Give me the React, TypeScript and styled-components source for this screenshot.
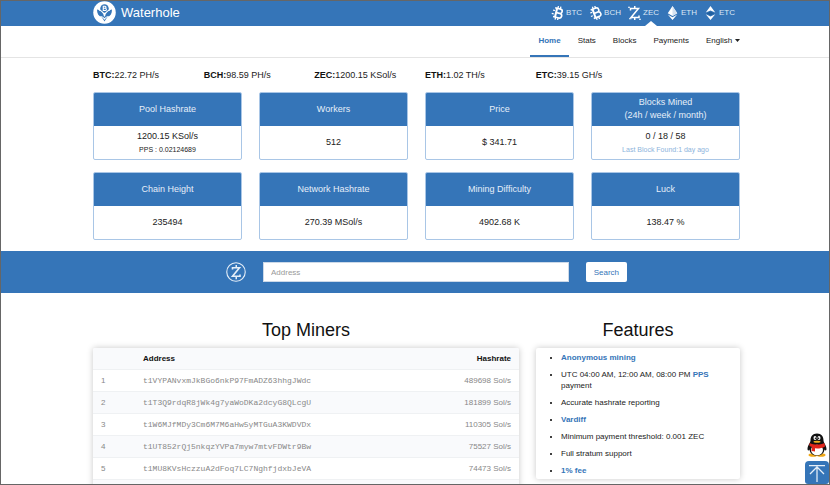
import React from "react";
import styled, { createGlobalStyle, css } from "styled-components";

const blue = "#3575b8";

const GlobalStyle = createGlobalStyle`
  *, *::before, *::after { box-sizing: border-box; }
  body {
    margin: 0;
    background: #fff;
    color: #222;
    font: 8px/11px "Liberation Sans", Arial, sans-serif;
  }
  a { color: inherit; text-decoration: none; }
`;

const Frame = styled.div`
  position: relative;
  height: 100vh;
  overflow: hidden;
  border: 1px solid #666;
`;

const gutter = css`
  padding-left: 92px;
  padding-right: 89px;
`;

const Header = styled.header`
  ${gutter}
  display: flex;
  align-items: center;
  justify-content: space-between;
  height: 25px;
  background: ${blue};
  color: #fff;
`;

const Brand = styled.a`
  display: flex;
  align-items: center;
  gap: 5px;
  padding-bottom: 2px;
  font-size: 13px;
  line-height: 16px;
  svg { width: 23px; height: 23px; }
`;

const CoinList = styled.nav`
  display: flex;
  align-self: stretch;
  gap: 7px;
  padding-right: 5px;
`;

const Coin = styled.a`
  display: flex;
  align-items: center;
  gap: 2px;
  color: #dce8f5;
  svg { width: 13px; height: 14px; margin-bottom: 2px; }
`;

const CoinLabel = styled.span<{ $active?: boolean }>`
  position: relative;
  display: flex;
  align-items: center;
  height: 100%;
  padding-bottom: 2px;
  ${({ $active }) =>
    $active &&
    css`
      &::after {
        content: "";
        position: absolute;
        bottom: 0;
        left: 50%;
        margin-left: -6px;
        border: 6px solid transparent;
        border-top: 0;
        border-bottom: 5px solid #fff;
      }
    `}
`;

const NavBar = styled.nav`
  ${gutter}
  display: flex;
  justify-content: flex-end;
  gap: 1px;
  height: 32px;
  border-bottom: 1px solid #e4e4e4;
`;

const Tab = styled.a<{ $active?: boolean }>`
  display: flex;
  align-items: center;
  padding: 0 8px;
  border-bottom: 2px solid ${({ $active }) => ($active ? blue : "transparent")};
  color: ${({ $active }) => ($active ? blue : "#222")};
  font-weight: ${({ $active }) => ($active ? 700 : 400)};
`;

const Language = styled.label`
  display: flex;
  align-items: center;
  gap: 2px;
  padding: 0 0 2px 8px;
  svg { width: 5px; height: 3px; }
`;

const LanguageSelect = styled.select`
  appearance: none;
  padding: 0;
  border: 0;
  background: none;
  color: #222;
  font: inherit;
`;

const Rates = styled.dl`
  display: grid;
  grid-template-columns: repeat(6, 1fr);
  margin: 0 -17px 0 0;
  padding: 11px 0;
  font-size: 9px;
  line-height: 12px;
  div { display: flex; }
  dt { font-weight: 700; color: #111; }
  dd { margin: 0; }
`;

const Summary = styled.section`
  ${gutter}
`;

const Cards = styled.div`
  display: grid;
  grid-template-columns: repeat(4, 1fr);
  gap: 12px 17px;
`;

const Card = styled.article`
  overflow: hidden;
  border: 1px solid #a9c6e6;
  border-radius: 2px;
  text-align: center;
  font-size: 9px;
  line-height: 13px;
`;

const CardTitle = styled.h2`
  display: flex;
  align-items: center;
  justify-content: center;
  height: 34px;
  margin: -1px -1px 0;
  background: ${blue};
  color: #e6eff8;
  font: inherit;
`;

const CardBody = styled.div`
  display: flex;
  flex-direction: column;
  align-items: center;
  justify-content: center;
  height: 33px;
`;

const CardNote = styled.small<{ $soft?: boolean }>`
  font-size: 7px;
  color: ${({ $soft }) => ($soft ? "#8db4dc" : "#222")};
`;

const SearchBar = styled.form`
  display: flex;
  align-items: center;
  justify-content: center;
  gap: 17px;
  margin-top: 11px;
  padding: 11px 202px 11px 225px;
  background: ${blue};
  svg { width: 20px; height: 20px; flex: none; }
`;

const AddressInput = styled.input`
  flex: 1;
  min-width: 0;
  height: 20px;
  padding: 0 7px;
  border: 1px solid #ccd9e8;
  border-radius: 0;
  background: #fff;
  font: inherit;
  &::placeholder { color: #999; opacity: 1; }
`;

const SearchButton = styled.button`
  height: 20px;
  padding: 0 8px;
  border: 0;
  border-radius: 2px;
  background: #fff;
  color: ${blue};
  font: inherit;
`;

const Details = styled.main`
  ${gutter}
  display: grid;
  grid-template-columns: 426fr 204fr;
  align-items: start;
  gap: 17px;
  padding-top: 27px;
`;

const Heading = styled.h2`
  margin: 0 0 8px;
  color: #111;
  font-size: 18px;
  font-weight: 400;
  line-height: 20px;
  text-align: center;
`;

const Panel = styled.div`
  overflow: hidden;
  border-radius: 2px;
  background: #fff;
  box-shadow: 0 0 6px rgba(0, 0, 0, 0.22);
`;

const MinerTable = styled.table`
  width: 100%;
  border-collapse: collapse;
  color: #888;
  tr { height: 22px; }
  thead tr { height: 21px; }
  tr:nth-child(even), thead tr { background: #f9fafc; }
  tbody tr { border-top: 1px solid #eff1f3; }
  th, td { padding: 0 8px; text-align: left; }
  th { color: #111; }
  th:first-child { width: 42px; }
  th:last-child, td:last-child { text-align: right; }
`;

const Address = styled.code`
  font: 8px/11px "Liberation Mono", "Courier New", monospace;
`;

const FeatureList = styled.ul`
  display: flex;
  flex-direction: column;
  gap: 6px;
  margin: 0;
  padding: 4px 24px 3px 25px;
  li::marker { color: #000; }
`;

const FeatureLink = styled.a`
  color: ${blue};
  font-weight: 700;
`;

const Floating = styled.aside`
  position: absolute;
  right: 0;
  bottom: 0;
  display: flex;
  flex-direction: column;
  align-items: center;
  gap: 4px;
  a { display: block; }
  svg { display: block; }
`;

const TopButton = styled.button`
  width: 24px;
  height: 23px;
  padding: 0;
  border: 0;
  border-radius: 4px 4px 3px 3px;
  background: ${blue};
  svg { width: 24px; height: 23px; }
`;

const Logo = () => (
  <svg viewBox="0 0 46 46" aria-hidden="true">
    <circle cx="23" cy="23" r="22.5" fill="#fff" />
    <circle cx="23" cy="15" r="8.5" fill={blue} />
    <path d="M8 17c8 1 13 5 15 12 2-7 7-11 15-12 0 8-3 13-9 15-2 2-4 6-6 9-2-3-4-7-6-9-6-2-9-7-9-15z" fill={blue} />
    <path d="M12 18c7 2 10 6 11 13 1-7 4-11 11-13" fill="none" stroke="#fff" strokeWidth="2.200" />
    <path d="M15 31c4 0 6 2 8 5 2-3 4-5 8-5" fill="none" stroke="#fff" strokeWidth="2.200" />
    <path d="M20.500 9.500v10M19.500 10.500h4.500a2 2 0 0 1 0 4h-3.500h4a2.200 2.200 0 0 1 0 4.500h-5" fill="none" stroke="#fff" strokeWidth="2.200" />
  </svg>
);

const BitcoinShape = ({ angle }: { angle: number }) => (
  <svg viewBox="0 0 26 28" fill="none" stroke="#fff" aria-hidden="true">
    <g transform={`rotate(${angle} 13 14)`}>
      <path d="M10 5v18" strokeWidth="4" />
      <path d="M6 5h11a4.200 4.200 0 0 1 0 8.800H10h8a4.400 4.400 0 0 1 0 9.200H6" strokeWidth="3.200" />
      <path d="M11.500 0v5M16.500 0v5M11.500 23v5M16.500 23v5" strokeWidth="2.600" />
      <path d="M3 10.500h4M2 17.500h4" strokeWidth="2.200" />
    </g>
  </svg>
);

const ZcashShape = () => (
  <svg viewBox="0 0 26 28" fill="none" stroke="#fff" aria-hidden="true">
    <path d="M5 9V5h16L6 23h16v-4" strokeWidth="3" />
    <path d="M13.500 0v4M13.500 24v4" strokeWidth="3" />
    <path d="M0 2.500h4M2 25.500h5M22 26.500h4" strokeWidth="2.200" />
  </svg>
);

const EthShape = () => (
  <svg viewBox="0 0 26 28" fill="#fff" aria-hidden="true">
    <path d="M13 0 22.500 14.500 13 20 3.500 14.500z" />
    <path d="M3.500 17l9.500 5.500 9.500-5.500L13 28z" />
    <path d="M13 0v20l9.500-5.500z" fill="#d4e2f1" />
  </svg>
);

const EtcShape = () => (
  <svg viewBox="0 0 26 28" fill="#fff" aria-hidden="true">
    <path d="M13 0 22.500 13 13 9 3.500 13z" />
    <path d="M13 11 21 14.500 13 19 5 14.500z" fill="#1f5f9f" />
    <path d="M3.500 16.500 13 21l9.500-4.500L13 28z" />
  </svg>
);

const ZcashCoin = () => (
  <svg viewBox="0 0 40 40" fill="none" stroke="#e6eff8" aria-hidden="true">
    <circle cx="20" cy="20" r="18.500" strokeWidth="2.200" />
    <path d="M13 15v-3.500h14L13 28.500h15V25" strokeWidth="3.200" />
    <path d="M20.500 6v5M20.500 29v5.500" strokeWidth="3" />
  </svg>
);

const Penguin = () => (
  <svg width="20" height="24" viewBox="0 0 40 48" aria-hidden="true">
    <ellipse cx="12" cy="44" rx="9" ry="3.500" fill="#f0a818" />
    <ellipse cx="28" cy="44" rx="9" ry="3.500" fill="#f0a818" />
    <path d="M20 1c9 0 13 6 13 14 0 4 6 10 6 17 0 3-2 4-4 1-1 8-7 12-15 12S6 41 5 33c-2 3-4 2-4-1 0-7 6-13 6-17C7 7 11 1 20 1z" fill="#111" />
    <ellipse cx="20" cy="34" rx="12" ry="10.500" fill="#fff" />
    <ellipse cx="16" cy="10" rx="3" ry="4" fill="#fff" />
    <ellipse cx="24" cy="10" rx="3" ry="4" fill="#fff" />
    <circle cx="17" cy="10.500" r="1.600" fill="#111" />
    <circle cx="23" cy="10.500" r="1.600" fill="#111" />
    <ellipse cx="20" cy="17.500" rx="7" ry="2" fill="#f0b020" />
    <path d="M5 20c9 4 21 4 30 0l1 7c-5 3-10 4-16 4l-4-.5V37l-7-1 1-8-5-2z" fill="#e1251b" />
  </svg>
);

const coins = [
  { name: "BTC", icon: <BitcoinShape angle={14} />, rate: "22.72 PH/s" },
  { name: "BCH", icon: <BitcoinShape angle={-20} />, rate: "98.59 PH/s" },
  { name: "ZEC", icon: <ZcashShape />, rate: "1200.15 KSol/s", active: true },
  { name: "ETH", icon: <EthShape />, rate: "1.02 TH/s" },
  { name: "ETC", icon: <EtcShape />, rate: "39.15 GH/s" },
];

const tabs = ["Home", "Stats", "Blocks", "Payments"];

const cards: { title: React.ReactNode; value: string; note?: string; soft?: boolean }[] = [
  { title: "Pool Hashrate", value: "1200.15 KSol/s", note: "PPS : 0.02124689" },
  { title: "Workers", value: "512" },
  { title: "Price", value: "$ 341.71" },
  {
    title: (
      <>
        Blocks Mined
        <br />
        (24h / week / month)
      </>
    ),
    value: "0 / 18 / 58",
    note: "Last Block Found:1 day ago",
    soft: true,
  },
  { title: "Chain Height", value: "235494" },
  { title: "Network Hashrate", value: "270.39 MSol/s" },
  { title: "Mining Difficulty", value: "4902.68 K" },
  { title: "Luck", value: "138.47 %" },
];

const miners = [
  ["t1VYPANvxmJkBGo6nkP97FmADZ63hhgJWdc", "489698 Sol/s"],
  ["t1T3Q9rdqR8jWk4g7yaWoDKa2dcyG8QLcgU", "181899 Sol/s"],
  ["t1W6MJfMDy3Cm6M7M6aHw5yMTGuA3KWDVDx", "110305 Sol/s"],
  ["t1UT852rQj5nkqzYVPa7myw7mtvFDWtr9Bw", "75527 Sol/s"],
  ["t1MU8KVsHczzuA2dFoq7LC7NghfjdxbJeVA", "74473 Sol/s"],
];

export default function App() {
  return (
    <Frame>
      <GlobalStyle />
      <Header>
        <Brand href="#">
          <Logo />
          Waterhole
        </Brand>
        <CoinList aria-label="Coins">
          {coins.map((coin) => (
            <Coin key={coin.name} href="#">
              {coin.icon}
              <CoinLabel $active={coin.active}>{coin.name}</CoinLabel>
            </Coin>
          ))}
        </CoinList>
      </Header>
      <NavBar aria-label="Main">
        {tabs.map((tab, i) => (
          <Tab key={tab} href="#" $active={i === 0}>
            {tab}
          </Tab>
        ))}
        <Language>
          <LanguageSelect aria-label="Language">
            <option>English</option>
          </LanguageSelect>
          <svg viewBox="0 0 10 6" aria-hidden="true">
            <path d="M0 0h10L5 6z" fill="#222" />
          </svg>
        </Language>
      </NavBar>
      <Summary>
        <Rates>
          {coins.map((coin) => (
            <div key={coin.name}>
              <dt>{coin.name}:</dt>
              <dd>{coin.rate}</dd>
            </div>
          ))}
        </Rates>
        <Cards>
          {cards.map((card) => (
            <Card key={card.value}>
              <CardTitle>
                <span>{card.title}</span>
              </CardTitle>
              <CardBody>
                <span>{card.value}</span>
                {card.note && <CardNote $soft={card.soft}>{card.note}</CardNote>}
              </CardBody>
            </Card>
          ))}
        </Cards>
      </Summary>
      <SearchBar onSubmit={(e) => e.preventDefault()}>
        <ZcashCoin />
        <AddressInput type="text" placeholder="Address" aria-label="Address" />
        <SearchButton type="submit">Search</SearchButton>
      </SearchBar>
      <Details>
        <section>
          <Heading>Top Miners</Heading>
          <Panel>
            <MinerTable>
              <thead>
                <tr>
                  <th />
                  <th>Address</th>
                  <th>Hashrate</th>
                </tr>
              </thead>
              <tbody>
                {miners.map(([address, rate], i) => (
                  <tr key={address}>
                    <td>{i + 1}</td>
                    <td>
                      <Address>{address}</Address>
                    </td>
                    <td>{rate}</td>
                  </tr>
                ))}
                <tr>
                  <td colSpan={3} />
                </tr>
              </tbody>
            </MinerTable>
          </Panel>
        </section>
        <section>
          <Heading>Features</Heading>
          <Panel>
            <FeatureList>
              <li>
                <FeatureLink href="#">Anonymous mining</FeatureLink>
              </li>
              <li>
                UTC 04:00 AM, 12:00 AM, 08:00 PM <FeatureLink href="#">PPS</FeatureLink> payment
              </li>
              <li>Accurate hashrate reporting</li>
              <li>
                <FeatureLink href="#">Vardiff</FeatureLink>
              </li>
              <li>Minimum payment threshold: 0.001 ZEC</li>
              <li>Full stratum support</li>
              <li>
                <FeatureLink href="#">1% fee</FeatureLink>
              </li>
            </FeatureList>
          </Panel>
        </section>
      </Details>
      <Floating>
        <a href="#" aria-label="QQ support">
          <Penguin />
        </a>
        <TopButton type="button" aria-label="Back to top">
          <svg viewBox="0 0 48 46" fill="none" stroke="#e6eff8" strokeWidth="2.500" aria-hidden="true">
            <path d="M8 9h32M24 11v31M10 26l14-14 14 14" />
          </svg>
        </TopButton>
      </Floating>
    </Frame>
  );
}
